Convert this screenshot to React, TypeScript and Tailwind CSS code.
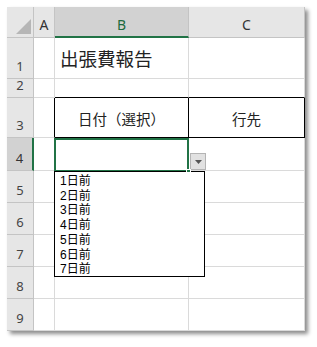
const rows = [1, 2, 3, 4, 5, 6, 7, 8, 9]
const items = ['1日前', '2日前', '3日前', '4日前', '5日前', '6日前', '7日前']

const jp = "font-['Noto_Sans_CJK_JP',sans-serif]"
const hd = "font-['Noto_Sans','Noto_Sans_CJK_JP',sans-serif]"
const list = "font-['Liberation_Sans','Noto_Sans_CJK_JP',sans-serif]"

const grid = 'border-r border-b border-[#dadada]'

export default function App() {
    return (
        <div className="w-[317px] h-[347px] bg-white pl-[7px] pt-[7px]">
            <div className="relative w-[298px] grid grid-cols-[27px_21px_134px_116px] grid-rows-[31px_41px_19px_40px_33px_32px_32px_32px_32px_32px] bg-white shadow-[3px_3px_4px_rgba(0,0,0,0.45)]">
                {/* column headers */}
                <div className="relative bg-[#e6e6e6] border-r border-b border-[#c4c4c4]">
                    <svg className="absolute right-[2px] bottom-[3px]" width="15" height="15" viewBox="0 0 15 15">
                        <polygon points="15,0 15,15 0,15" fill="#b6b6b6" />
                    </svg>
                </div>
                <div className={`flex items-end justify-center pb-[5px] bg-[#e6e6e6] border-r border-b border-[#c4c4c4] text-[14px] leading-none text-[#333] ${hd}`}>A</div>
                <div className={`flex items-end justify-center pb-[4px] bg-[#d2d2d2] border-r border-[#c4c4c4] border-b-2 border-b-[#217346] text-[14px] leading-none text-[#1e6b40] ${hd}`}>B</div>
                <div className={`flex items-end justify-center pb-[5px] bg-[#e6e6e6] border-r border-b border-[#c4c4c4] text-[14px] leading-none text-[#333] ${hd}`}>C</div>

                {rows.map((r) => (
                    <Row key={r} r={r} />
                ))}

                {/* active cell B4 */}
                <div className="absolute left-[47px] top-[131px] w-[135px] h-[34px] border-2 border-[#217346]" />

                {/* validation dropdown button */}
                <div className="absolute left-[183px] top-[146px] w-[16px] h-[17px] flex items-center justify-center bg-[#e1e1e1] border border-[#b4b4b4]">
                    <svg width="7" height="4" viewBox="0 0 7 4">
                        <polygon points="0,0 7,0 3.5,4" fill="#555" />
                    </svg>
                </div>

                {/* dropdown list */}
                <div className={`absolute left-[47px] top-[164px] w-[151px] h-[106px] bg-white border border-black pl-[5px] pt-[2px] ${list}`}>
                    {items.map((t) => (
                        <div key={t} className="text-[12px] leading-[14.7px] text-black">{t}</div>
                    ))}
                </div>

                <div className="absolute left-[179px] top-[162px] w-[5px] h-[4px] bg-[#217346] border border-white" />
            </div>
        </div>
    )
}

function Row({ r }: { r: number }) {
    const sel = r === 4
    return (
        <>
            <div className={`flex items-end justify-center pb-[5px] text-[13px] leading-none ${hd} border-b border-[#c4c4c4] ${sel ? 'bg-[#d2d2d2] border-r-2 border-r-[#217346] text-[#333]' : 'bg-[#e6e6e6] border-r border-r-[#c4c4c4] text-[#444]'}`}>
                {r}
            </div>
            <div className={r === 3 ? 'border-b border-[#dadada] border-r border-r-black' : grid} />
            {r === 1 ? (
                <div className={`${grid} flex items-center pl-[5px] pt-[1px] text-[18.5px] leading-none text-[#222] ${jp}`}>出張費報告</div>
            ) : r === 2 ? (
                <div className="border-r border-[#dadada] border-b border-b-black" />
            ) : r === 3 ? (
                <div className={`border-r border-b border-black flex items-center justify-center pt-[3px] text-[14.5px] leading-none text-[#222] ${jp}`}>日付（選択）</div>
            ) : (
                <div className={grid} />
            )}
            {r === 2 ? (
                <div className="border-r border-[#dadada] border-b border-b-black" />
            ) : r === 3 ? (
                <div className={`border-r border-b border-black flex items-center justify-center pt-[3px] text-[14.5px] leading-none text-[#222] ${jp}`}>行先</div>
            ) : (
                <div className={grid} />
            )}
        </>
    )
}
